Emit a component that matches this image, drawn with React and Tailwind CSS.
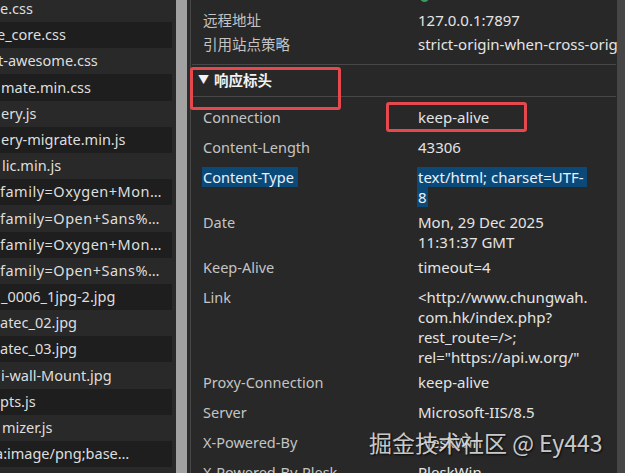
import React from "react";

const leftRows = [
  { t: "e.css", o: "ml-[0px]" },
  { t: "e_core.css", o: "ml-[-3px]" },
  { t: "t-awesome.css", o: "ml-[-2px]" },
  { t: "mate.min.css", o: "ml-[1px]" },
  { t: "ery.js", o: "ml-[1px]" },
  { t: "ery-migrate.min.js", o: "ml-[1px]" },
  { t: "lic.min.js", o: "ml-[2px]" },
  { t: "family=Oxygen+Mon…", o: "ml-[0px] tracking-[0.5px]" },
  { t: "family=Open+Sans%…", o: "ml-[0px] tracking-[0.5px]" },
  { t: "family=Oxygen+Mon…", o: "ml-[0px] tracking-[0.5px]" },
  { t: "family=Open+Sans%…", o: "ml-[0px] tracking-[0.5px]" },
  { t: "_0006_1jpg-2.jpg", o: "ml-[1px]" },
  { t: "atec_02.jpg", o: "ml-[0px]" },
  { t: "atec_03.jpg", o: "ml-[0px]" },
  { t: "i-wall-Mount.jpg", o: "ml-[1px]" },
  { t: "pts.js", o: "ml-[0px]" },
  { t: "mizer.js", o: "ml-[2px]" },
  { t: "a:image/png;base…", o: "ml-[-5px]" },
  { t: "", o: "" },
];

function Row({ k, children }) {
  return (
    <div className="grid grid-cols-[215px_1fr] pt-[5px] min-h-[30px] leading-[20px] pl-[12px]">
      <div className="text-[#c4c4c4] whitespace-nowrap">{k}</div>
      <div className="text-[#e4e4e4] whitespace-nowrap text-[15px]">{children}</div>
    </div>
  );
}

function GenRow({ k, children }) {
  return (
    <div className="grid grid-cols-[215px_1fr] h-[24px] leading-[24px] pl-[12px]">
      <div className="text-[#c4c4c4] whitespace-nowrap">{k}</div>
      <div className="text-[#e4e4e4] whitespace-nowrap overflow-hidden text-[15px]">{children}</div>
    </div>
  );
}

export default function App() {
  return (
    <div className="relative w-[625px] h-[473px] overflow-hidden flex bg-[#282828] font-['Noto_Sans','Noto_Sans_CJK_SC',sans-serif] text-[14.5px]">
      {/* left file list */}
      <div className="w-[176px] shrink-0 bg-[#292929] overflow-hidden">
        <div className="mt-[-4.2px]">
          {leftRows.map((r, i) => (
            <div
              key={i}
              className={`h-[26.2px] w-[172px] flex items-center overflow-hidden whitespace-nowrap text-[#dedede] ${
                i % 2 === 1 ? "bg-[#1e1e1e]" : "bg-[#292929]"
              }`}
            >
              <span className={r.o}>{r.t}</span>
            </div>
          ))}
        </div>
      </div>
      <div className="w-[11px] shrink-0 bg-[#a2a2a2]" />
      <div className="w-[3px] shrink-0 bg-[#2d2d2d]" />
      <div className="w-px shrink-0 bg-[#474747]" />

      {/* right headers panel */}
      <div className="w-[426px] shrink-0 overflow-hidden">
        <div className="mt-[-16px]">
          <div className="grid grid-cols-[215px_1fr] h-[24px] pl-[12px]">
            <div />
            <div className="pt-[9px] pl-[2px]">
              <div className="w-[9px] h-[9px] rounded-full bg-[#3c9a5f]" />
            </div>
          </div>
          <GenRow k="远程地址">127.0.0.1:7897</GenRow>
          <GenRow k="引用站点策略">strict-origin-when-cross-origin</GenRow>
        </div>
        <div className="h-[8px]" />
        <div className="h-px mx-[1px] bg-[#474747]" />
        <div className="h-[31px] flex items-center pl-[7px] text-[#f2f2f2] font-bold">
          <span className="text-[11px] mr-[5px]">▼</span>
          <span>响应标头</span>
        </div>
        <div className="h-px mx-[1px] bg-[#474747]" />
        <div className="h-[5px]" />
        <Row k="Connection">keep-alive</Row>
        <Row k="Content-Length">43306</Row>
        <div className="grid grid-cols-[215px_1fr] pt-[5px] min-h-[30px] leading-[20px] pl-[12px]">
          <div className="whitespace-nowrap">
            <span className="bg-[#0b4a78] text-[#e8f2ff] pr-[4px] ml-[-1px] pl-[1px]">Content-Type</span>
          </div>
          <div className="whitespace-nowrap text-[#e8f2ff] text-[15px]">
            <span className="bg-[#0b4a78] pr-[3px] ml-[-1px] pl-[1px]">text/html; charset=UTF-</span>
            <br />
            <span className="bg-[#0b4a78] ml-[-1px] pl-[1px] pr-[1px]">8</span>
          </div>
        </div>
        <Row k="Date">
          Mon, 29 Dec 2025
          <br />
          11:31:37 GMT
        </Row>
        <Row k="Keep-Alive">timeout=4</Row>
        <Row k="Link">
          {"<http://www.chungwah."}
          <br />
          com.hk/index.php?
          <br />
          {"rest_route=/>;"}
          <br />
          {'rel="https://api.w.org/"'}
        </Row>
        <Row k="Proxy-Connection">keep-alive</Row>
        <Row k="Server">Microsoft-IIS/8.5</Row>
        <Row k="X-Powered-By">PleskWin</Row>
        <Row k="X-Powered-By-Plesk">PleskWin</Row>
      </div>
      <div className="flex-1 bg-[#464646]" />

      {/* annotation boxes */}
      <div className="absolute left-[190px] top-[67px] w-[151px] h-[43px] border-[3px] border-[#e5484d] rounded-[3px]" />
      <div className="absolute left-[386px] top-[102px] w-[141px] h-[30px] border-[3px] border-[#e5484d] rounded-[3px]" />

      {/* watermark */}
      <div className="absolute left-[369px] top-[426px] text-[23px] leading-[32px] whitespace-nowrap text-[#e2e2e2]/90 font-['Noto_Sans_CJK_SC','Noto_Sans',sans-serif] [text-shadow:1px_1px_2px_rgba(0,0,0,0.85)]">
        掘金技术社区 @ Ey443
      </div>
    </div>
  );
}
